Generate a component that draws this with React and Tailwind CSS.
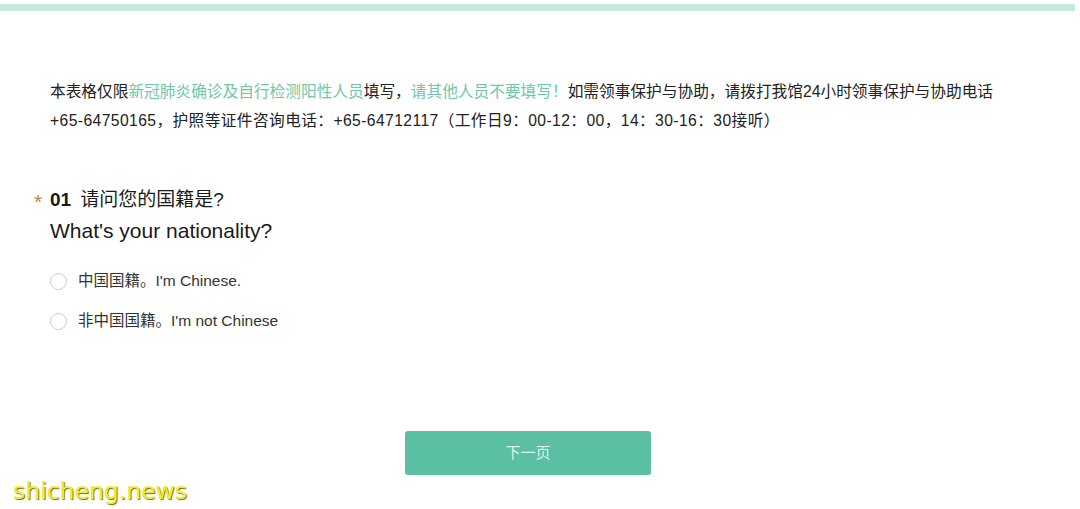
export default function App() {
  const font = { fontFamily: '"Liberation Sans", "Noto Sans CJK SC", Arial, sans-serif' };
  return (
    <div className="w-[1080px] h-[509px] bg-white relative overflow-hidden" style={font}>
      <div className="h-[4px]" />
      <div className="h-[7px] w-[1075px] bg-[#c6e8df]" />
      <div className="pl-[50px] pr-[40px] pt-[66px]">
        <p className="text-[15.7px] leading-[29px] text-[#222]">
          本表格仅限<span className="text-[#6cc8a6]">新冠肺炎确诊及自行检测阳性人员</span>填写，<span className="text-[#6cc8a6]">请其他人员不要填写！</span>如需领事保护与协助，请拨打我馆24小时领事保护与协助电话
          <br />
          <span className="tracking-[0.4px]">+65-64750165，护照等证件咨询电话：+65-64712117（工作日9：00-12：00，14：30-16：30接听）</span>
        </p>
        <div className="mt-[49px] relative">
          <span className="absolute left-[-16px] top-[2px] text-[21px] text-[#b48a4e]">*</span>
          <div className="text-[19px] leading-[31px] text-[#1a1a1a]">
            <span className="font-bold mr-[9px]">01</span>请问您的国籍是?
          </div>
          <div className="text-[21px] leading-[31px] text-[#1a1a1a]">
            What's your nationality?
          </div>
        </div>
        <div className="mt-[25px] flex flex-col gap-[20px]">
          {["中国国籍。I'm Chinese.", "非中国国籍。I'm not Chinese"].map((t) => (
            <div key={t} className="flex items-center h-[20px]">
              <span className="w-[17px] h-[17px] rounded-full border border-[#c4ccd6] bg-white" />
              <span className="ml-[11px] text-[15.5px] text-[#333]">{t}</span>
            </div>
          ))}
        </div>
      </div>
      <div className="flex mt-[100px] pl-[405px]">
        <button className="w-[246px] h-[44px] rounded-[3px] bg-[#5bbfa4] text-[15px] text-[#dff5ee]">
          下一页
        </button>
      </div>
      <div
        className="absolute left-[13px] top-[474px] text-[23.5px] text-[#f0ee2c]"
        style={{ fontFamily: '"DejaVu Sans", sans-serif', textShadow: '1px 1px 1px #6b6a20' }}
      >
        shicheng.news
      </div>
    </div>
  );
}
